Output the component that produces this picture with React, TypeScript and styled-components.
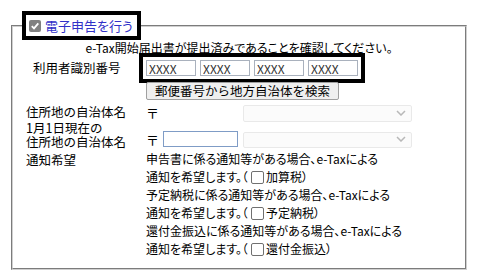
import React from "react";
import styled, { createGlobalStyle } from "styled-components";

const Global = createGlobalStyle`
  html, body { margin: 0; padding: 0; background: #fff; }
  body {
    margin: 8px;
    font-family: "Noto Sans CJK JP", "Noto Sans", sans-serif;
    font-size: 12px;
    color: #000;
  }
`;

const Fieldset = styled.fieldset`
  box-sizing: border-box;
  width: 456px;
  margin: 3px 0 0 3px;
  padding: 0 9px 10px 9px;
  border: 2px groove #d0d0d0;
  min-width: 0;
`;

const Legend = styled.legend`
  display: flex;
  align-items: center;
  gap: 4px;
  padding: 3px 4px 3px 3px;
  border: 4px solid #000;
  color: #3030c8;
  font-size: 13px;
  line-height: 15px;
  font-feature-settings: "palt";
`;

const CheckedBox = styled.span`
  display: inline-flex;
  align-items: center;
  justify-content: center;
  width: 12px;
  height: 12px;
  border-radius: 2px;
  background: #808080;
`;

const EmptyBox = styled.span`
  display: inline-block;
  box-sizing: border-box;
  width: 13px;
  height: 13px;
  margin: 0 2px 0 3px;
  border: 1px solid #707070;
  border-radius: 2px;
  background: #fff;
  vertical-align: -2px;
`;

const Punct = styled.span`
  font-feature-settings: normal;
`;

const Notice = styled.div`
  text-align: center;
  line-height: 16px;
  font-feature-settings: "palt";
`;

const Grid = styled.div`
  display: grid;
  grid-template-columns: 124px 1fr;
`;

const Label = styled.div<{ $indent?: number; $mt?: number; $start?: boolean }>`
  padding-left: ${(p) => p.$indent ?? 4}px;
  margin-top: ${(p) => p.$mt ?? 0}px;
  line-height: 14px;
  font-size: 12.5px;
  align-self: ${(p) => (p.$start ? "start" : "center")};
`;

const Cell = styled.div<{ $mt?: number; $align?: string; $pb?: number }>`
  display: flex;
  align-items: ${(p) => p.$align ?? "center"};
  margin-top: ${(p) => p.$mt ?? 0}px;
  padding-bottom: ${(p) => p.$pb ?? 0}px;
`;

const IdGroup = styled.div`
  display: flex;
  gap: 4px;
  outline: 4px solid #000;
  outline-offset: 3px;
`;

const IdInput = styled.input`
  box-sizing: border-box;
  width: 50px;
  height: 16px;
  margin: 0;
  padding: 0 2px;
  border: 1px solid #a9b1bd;
  font-family: inherit;
  font-size: 12px;
  color: #333;
  background: #fff;
`;

const Button = styled.button`
  box-sizing: border-box;
  height: 18px;
  margin: 0;
  padding: 0 8px;
  border: 1px solid #a0a0a0;
  border-radius: 2px;
  background: #efefef;
  font-family: inherit;
  font-size: 12.5px;
  line-height: 16px;
  color: #000;
`;

const Zip = styled.span`
  display: inline-block;
  width: 17px;
  font-size: 13px;
  line-height: 14px;
`;

const ZipInput = styled.input<{ $hidden?: boolean }>`
  box-sizing: border-box;
  width: 75px;
  height: 16px;
  margin: 0 5px 0 0;
  padding: 0 2px;
  border: 1px solid #7f9cc6;
  background: #fff;
  visibility: ${(p) => (p.$hidden ? "hidden" : "visible")};
`;

const SelectWrap = styled.div<{ $h: number }>`
  position: relative;
  width: 169px;
  height: ${(p) => p.$h}px;
`;

const Select = styled.select`
  appearance: none;
  box-sizing: border-box;
  width: 100%;
  height: 100%;
  margin: 0;
  border: 1px solid #e1e1e1;
  border-radius: 2px;
  background: #fafafa;
`;

const Chevron = styled.svg`
  position: absolute;
  right: 6px;
  top: 50%;
  margin-top: -3px;
  pointer-events: none;
`;

const Notify = styled.div`
  line-height: 18px;
  padding-top: 1px;
  font-feature-settings: "palt";
`;

const Line = styled.div`
  white-space: nowrap;
`;

function DisabledSelect({ h }: { h: number }) {
  return (
    <SelectWrap $h={h}>
      <Select disabled />
      <Chevron width="10" height="6" viewBox="0 0 10 6">
        <path d="M1 1 L5 5 L9 1" fill="none" stroke="#b8b8b8" strokeWidth="1.5" />
      </Chevron>
    </SelectWrap>
  );
}

function WishLine({ item }: { item: string }) {
  return (
    <Line>
      通知を希望します。<Punct>（</Punct>
      <EmptyBox />
      {item}）
    </Line>
  );
}

export default function App() {
  return (
    <>
      <Global />
      <Fieldset>
        <Legend>
          <CheckedBox>
            <svg width="10" height="10" viewBox="0 0 10 10">
              <path d="M1.8 5.2 L4 7.4 L8.3 2.4" fill="none" stroke="#fff" strokeWidth="1.8" />
            </svg>
          </CheckedBox>
          電子申告を行う
        </Legend>
        <Notice>e-Tax開始届出書が提出済みであることを確認してください。</Notice>
        <Grid>
          <Label $indent={11} $mt={4}>利用者識別番号</Label>
          <Cell $mt={4}>
            <IdGroup>
              <IdInput defaultValue="XXXX" />
              <IdInput defaultValue="XXXX" />
              <IdInput defaultValue="XXXX" />
              <IdInput defaultValue="XXXX" />
            </IdGroup>
          </Cell>

          <div />
          <Cell $mt={6}>
            <Button>郵便番号から地方自治体を検索</Button>
          </Cell>

          <Label $mt={2}>住所地の自治体名</Label>
          <Cell $mt={4}>
            <Zip>〒</Zip>
            <ZipInput $hidden tabIndex={-1} />
            <DisabledSelect h={17} />
          </Cell>

          <Label $start $mt={0}>
            1月1日現在の
            <br />
            住所地の自治体名
          </Label>
          <Cell $align="flex-end" $pb={2}>
            <Zip>〒</Zip>
            <ZipInput />
            <DisabledSelect h={16} />
          </Cell>

          <Label $start $mt={4}>通知希望</Label>
          <Notify>
            <Line>申告書に係る通知等がある場合、e-Taxによる</Line>
            <WishLine item="加算税" />
            <Line>予定納税に係る通知等がある場合、e-Taxによる</Line>
            <WishLine item="予定納税" />
            <Line>還付金振込に係る通知等がある場合、e-Taxによる</Line>
            <WishLine item="還付金振込" />
          </Notify>
        </Grid>
      </Fieldset>
    </>
  );
}
